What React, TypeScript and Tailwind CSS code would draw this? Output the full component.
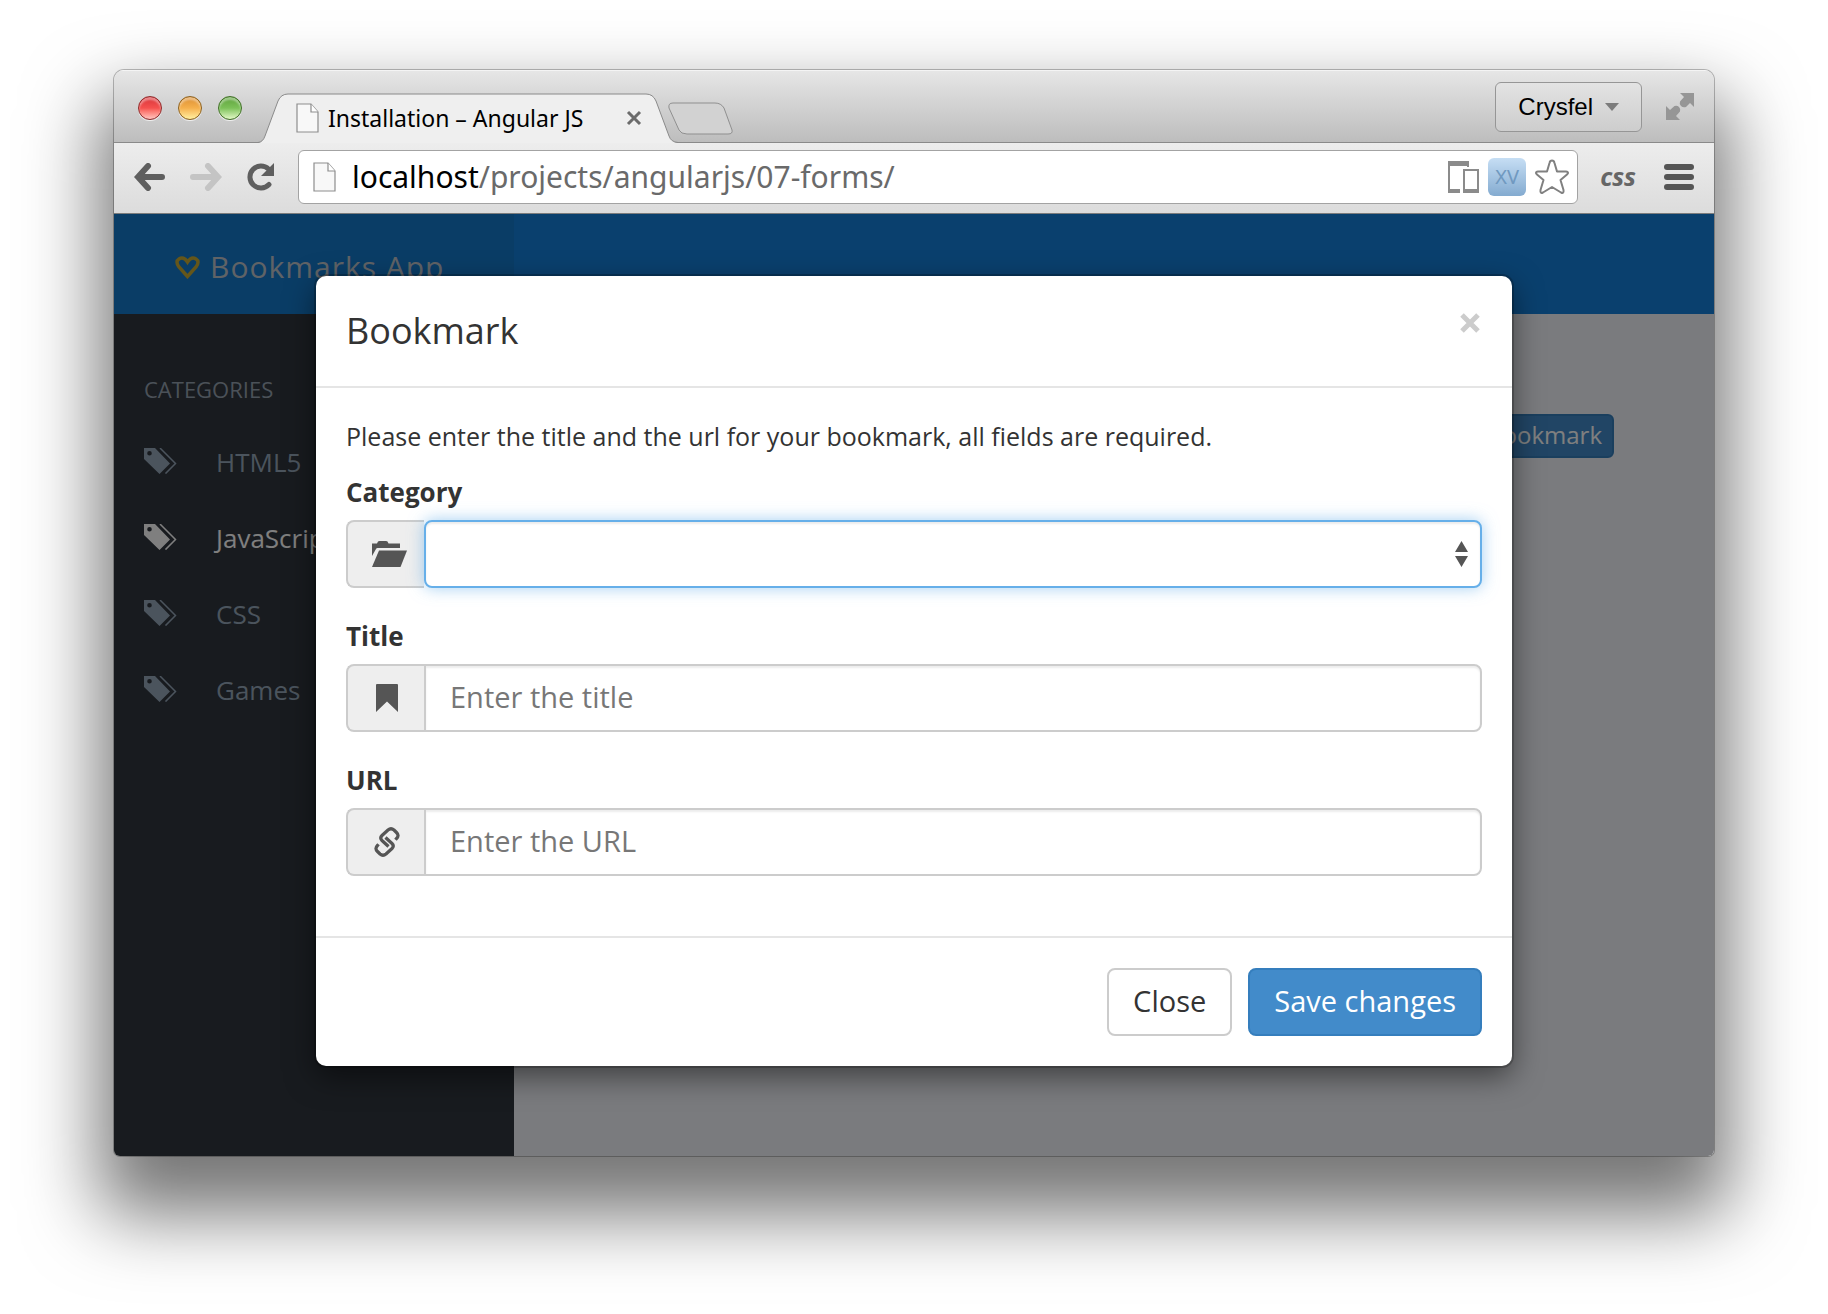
import React from 'react';

interface FieldProps {
  id: string;
  label: string;
  icon: React.ReactNode;
  children: React.ReactNode;
}

const categories = [
  { name: 'HTML5', active: false },
  { name: 'JavaScript', active: true },
  { name: 'CSS', active: false },
  { name: 'Games', active: false },
];

const TagsIcon = () => (
  <svg width="33" height="26" viewBox="0 0 33 26" fill="none">
    <path
      fillRule="evenodd"
      fill="currentColor"
      d="M0 0H11L26 15.500L15.500 26L0 11ZM5.500 3A2.300 2.300 0 1 0 5.500 7.600A2.300 2.300 0 1 0 5.500 3Z"
    />
    <path d="M16 0L31.500 15.500L21.500 25.600" stroke="currentColor" strokeWidth="1.500" />
  </svg>
);

const FolderIcon = () => (
  <svg width="40" height="26" viewBox="-5 0 40 26" fill="currentColor">
    <path d="M0 2.500H5L6 0.500Q6.500 0 7.500 0H14Q15 0 15.500 0.500L16.500 2.500H28V7H5.500Q4.500 7 4 8L0 15Z" />
    <path d="M7 9.500H35L28.500 26H0Z" />
  </svg>
);

const BookmarkIcon = () => (
  <svg width="22" height="28" viewBox="0 0 22 28" fill="currentColor">
    <path d="M1 0H21Q22 0 22 1V28L11 17.500L0 28V1Q0 0 1 0Z" />
  </svg>
);

const LinkIcon = () => (
  <svg
    width="26"
    height="30"
    viewBox="0 0 26 30"
    fill="none"
    stroke="currentColor"
    strokeWidth="3.200"
  >
    <path d="M14.500 19.500L8 13.500Q5.500 11 8 8.500L14 3Q17 0.500 20 3L22.500 5.500Q25.500 8.500 22.500 11.500L21.500 12.800" />
    <path d="M11.500 10.500L18 16.500Q20.500 19 18 21.500L12 27Q9 29.500 6 27L3.500 24.500Q0.500 21.500 3.500 18.500L4.500 17.200" />
  </svg>
);

const PageIcon = () => (
  <svg width="24" height="30" viewBox="0 0 24 30" fill="none">
    <path d="M1 1H15L22 9V29H1Z" fill="#f8f8f8" stroke="#8d8d8d" strokeWidth="1.200" />
    <path d="M15 1V9H22" fill="#fff" stroke="#8d8d8d" strokeWidth="1.200" />
  </svg>
);

const TabStrip = () => (
  <div className="flex h-[73px] items-end border-t border-b border-t-[#f4f4f4] border-b-[#8a8a8a] bg-linear-to-b from-[#e6e6e6] to-[#bdbdbd]">
    <div className="flex gap-4 self-center pt-0.5 pl-6">
      <button aria-label="Close window" className="h-6 w-6 rounded-full border border-[#8e2b2b] bg-linear-to-b from-[#d9343a] via-[#f5504e] to-[#ffc4c0] shadow-[inset_0_3px_2px_rgba(255,255,255,0.4),0_1px_0_#f0f0f0]" />
      <button aria-label="Minimize window" className="h-6 w-6 rounded-full border border-[#8c611f] bg-linear-to-b from-[#dc8f33] via-[#f5b04c] to-[#fff0a0] shadow-[inset_0_3px_2px_rgba(255,255,255,0.4),0_1px_0_#f0f0f0]" />
      <button aria-label="Zoom window" className="h-6 w-6 rounded-full border border-[#406f26] bg-linear-to-b from-[#5ea23c] via-[#7cc158] to-[#e2f8c6] shadow-[inset_0_3px_2px_rgba(255,255,255,0.4),0_1px_0_#f0f0f0]" />
    </div>
    <div className="relative -mb-px ml-4 h-[50px] w-[420px]">
      <svg className="absolute inset-0" width="420" height="50" viewBox="0 0 420 50">
        <path
          d="M0 50Q5 49 7 43L20 8Q23 1 30 1H388Q395 1 398 8L411 43Q413 49 420 50Z"
          fill="#efefef"
        />
        <path
          d="M0 49.500Q5 49 7 43L20 8Q23 1 30 1H388Q395 1 398 8L411 43Q413 49 420 49.500"
          fill="none"
          stroke="#8a8a8a"
        />
      </svg>
      <div className="relative flex h-full items-center pr-9 pl-[38px]">
        <PageIcon />
        <span className="ml-2 flex-1 text-[23px] whitespace-nowrap text-black">
          Installation – Angular JS
        </span>
        <button aria-label="Close tab">
          <svg width="16" height="16" viewBox="0 0 16 16" stroke="#6b6b6b" strokeWidth="3">
            <path d="M2 2L14 14M14 2L2 14" />
          </svg>
        </button>
      </div>
    </div>
    <button aria-label="New tab" className="mb-1.5 -ml-2.5">
      <svg width="66" height="34" viewBox="0 0 66 34">
        <path
          d="M5 1H47Q53 1 56 6L64 28Q65 32 60 32H19Q13 32 11 28L1 6Q0 1 5 1Z"
          fill="#d2d2d2"
          stroke="#8f8f8f"
        />
      </svg>
    </button>
    <div className="flex flex-1 items-center justify-end self-center pr-[19px]">
      <button className="flex h-[50px] items-center gap-3 rounded-md border border-[#969696] bg-linear-to-b from-[#e3e3e3] to-[#cdcdcd] px-[22px] font-['Liberation_Sans',sans-serif] text-2xl text-black">
        Crysfel
        <svg width="14" height="8" viewBox="0 0 14 8" fill="#7c7c7c">
          <path d="M0 0H14L7 8Z" />
        </svg>
      </button>
      <button aria-label="Full screen" className="ml-6">
        <svg width="29" height="29" viewBox="0 0 29 29" fill="#969696">
          <path d="M14 1H28V15L24 11L20 15Q17 16 15 14Q13 12 14 9.500L18 5Z" />
          <path d="M0 14L4 18L8.500 14Q11 13 13 15Q15 17 14 19.500L10 24L14 28H0Z" />
        </svg>
      </button>
    </div>
  </div>
);

const Toolbar = () => (
  <div className="flex h-[71px] items-center border-b border-[#7c7c7c] bg-linear-to-b from-[#ededed] to-[#dcdcdc] px-5 pb-0.5">
    <button aria-label="Back">
      <svg width="32" height="28" viewBox="0 0 32 28" fill="none" stroke="#5f5f5f" strokeWidth="6">
        <path d="M6 14H28M14 3L4 14L14 25" strokeLinecap="round" />
      </svg>
    </button>
    <button aria-label="Forward" className="ml-6">
      <svg width="32" height="28" viewBox="0 0 32 28" fill="none" stroke="#c4c4c4" strokeWidth="6">
        <path d="M3 14H26M18 3L28 14L18 25" strokeLinecap="round" />
      </svg>
    </button>
    <button aria-label="Reload" className="ml-6">
      <svg width="30" height="28" viewBox="0 0 30 28" fill="none">
        <path
          d="M23 21.500A11 11 0 1 1 22.500 6"
          stroke="#5f5f5f"
          strokeWidth="5"
          strokeLinecap="round"
        />
        <path d="M28 0V13H15Z" fill="#5f5f5f" />
      </svg>
    </button>
    <div className="ml-[22px] flex h-[54px] flex-1 items-center rounded-md border border-[#a3a3a3] bg-white pr-[7px] pl-3.5">
      <PageIcon />
      <div className="ml-[15px] flex-1 text-3xl whitespace-nowrap text-[#6a6a6a]">
        <span className="text-black">localhost</span>/projects/angularjs/07-forms/
      </div>
      <svg width="32" height="32" viewBox="0 0 32 32" fill="none" stroke="#8b8b8b" strokeWidth="2">
        <path d="M12 31H1V1H20V6" />
        <path d="M1 3H20M1 30H12" strokeWidth="4" />
        <path d="M16 9H30V31H16Z" />
        <path d="M16 30H30" strokeWidth="4" />
      </svg>
      <div className="ml-2 flex h-[38px] w-[38px] items-center justify-center rounded-md bg-linear-to-b from-[#c6def4] to-[#84abd0] text-xl text-[#7099c0]">
        XV
      </div>
      <svg className="ml-2" width="36" height="36" viewBox="0 0 36 36" fill="none" stroke="#808080" strokeWidth="2">
        <path
          strokeLinejoin="round"
          d="M18 1.500Q20 1.500 20.500 4L23 12.500H32Q35.500 13 33 15.500L26.500 21L29.500 31Q30 35 27 33.500L18 28L9 33.500Q6 35 6.500 31L9.500 21L3 15.500Q0.500 13 4 12.500H13L15.500 4Q16 1.500 18 1.500Z"
        />
      </svg>
    </div>
    <span className="ml-[22px] text-[25px] font-bold text-[#666] italic">css</span>
    <button aria-label="Menu" className="ml-7 flex flex-col gap-1">
      <span className="h-1.5 w-[30px] rounded-full bg-[#555]" />
      <span className="h-1.5 w-[30px] rounded-full bg-[#555]" />
      <span className="h-1.5 w-[30px] rounded-full bg-[#555]" />
    </button>
  </div>
);

const Field = ({ id, label, icon, children }: FieldProps) => (
  <div className="mb-7">
    <label htmlFor={id} className="mb-2 block text-[26px] leading-10 font-bold">
      {label}
    </label>
    <div className="flex h-[68px]">
      <span className="flex w-[78px] items-center justify-center rounded-l-lg border-2 border-r-0 border-[#ccc] bg-[#eee] pl-0.5 text-[#555]">
        {icon}
      </span>
      {children}
    </div>
  </div>
);

const inputClass =
  'min-w-0 flex-1 rounded-r-lg border-2 border-[#ccc] bg-white px-6 pb-0.5 text-[29px] text-[#555] shadow-[inset_0_2px_2px_rgba(0,0,0,0.075)] outline-none placeholder:text-[#777]';

const BookmarkModal = () => (
  <div
    role="dialog"
    aria-labelledby="modal-title"
    className="mx-auto w-full max-w-[1196px] rounded-[10px] bg-white text-[#333] shadow-[0_0_0_2px_rgba(0,0,0,0.2),0_10px_30px_rgba(0,0,0,0.5)]"
  >
    <div className="flex h-28 items-start justify-between border-b-2 border-[#e5e5e5] px-[30px] pt-[29px]">
      <h4 id="modal-title" className="text-4xl leading-[52px]">
        Bookmark
      </h4>
      <button aria-label="Close" className="mt-2 mr-0.5">
        <svg width="20" height="20" viewBox="0 0 20 20" stroke="#ccc" strokeWidth="5">
          <path d="M2 2L18 18M18 2L2 18" />
        </svg>
      </button>
    </div>

    <form className="px-[30px] pt-7 pb-8">
      <p className="mb-4 text-[25px] leading-10">
        Please enter the title and the url for your bookmark, all fields are required.
      </p>
      <Field id="category" label="Category" icon={<FolderIcon />}>
        <div className="relative flex min-w-0 flex-1">
          <select
            id="category"
            className="flex-1 appearance-none rounded-lg border-2 border-[#66afe9] bg-white px-6 text-[29px] shadow-[inset_0_2px_2px_rgba(0,0,0,0.075),0_0_16px_rgba(102,175,233,0.6)] outline-none"
          >
            <option></option>
          </select>
          <svg className="pointer-events-none absolute top-[21px] right-3.5" width="13" height="26" viewBox="0 0 13 26" fill="#555">
            <path d="M6.500 0L13 11H0ZM0 15H13L6.500 26Z" />
          </svg>
        </div>
      </Field>
      <Field id="title" label="Title" icon={<BookmarkIcon />}>
        <input id="title" type="text" placeholder="Enter the title" className={inputClass} />
      </Field>
      <Field id="url" label="URL" icon={<LinkIcon />}>
        <input id="url" type="text" placeholder="Enter the URL" className={inputClass} />
      </Field>
    </form>

    <div className="flex justify-end gap-4 border-t-2 border-[#e5e5e5] p-[30px] text-[29px]">
      <button className="h-[68px] rounded-lg border-2 border-[#ccc] bg-white px-6 pb-0.5">
        Close
      </button>
      <button className="h-[68px] rounded-lg border-2 border-[#357ebd] bg-[#428bca] px-6 pb-0.5 text-white">
        Save changes
      </button>
    </div>
  </div>
);

const BookmarksPage = () => (
  <div className="flex h-full flex-col">
    <header className="flex h-[100px] bg-[#1480dc]">
      <div className="flex w-[400px] items-center gap-2.5 bg-[#147acc] pt-1.5 pl-[61px] text-3xl tracking-[1px] text-[#c0c6cc]">
        <svg width="25" height="23" viewBox="0 0 25 23" fill="none" stroke="#c8ac34" strokeWidth="3.500">
          <path d="M12.500 20.500L4 11Q0 5.500 4 3Q8.500 0 12.500 6Q16.500 0 21 3Q25 5.500 21 11Z" />
        </svg>
        <span>Bookmarks App</span>
      </div>
    </header>
    <div className="flex flex-1">
      <nav className="w-[400px] bg-[#30363e] px-[30px] pt-[59px] text-[26px] text-[#96a8ba]">
        <h2 className="text-[22px] leading-8 text-[#96a3b0]">CATEGORIES</h2>
        <ul className="mt-[18px]">
          {categories.map((category) => (
            <li key={category.name}>
              <a
                href="#"
                className={
                  category.active
                    ? 'flex h-[76px] items-center gap-[39px] text-white'
                    : 'flex h-[76px] items-center gap-[39px]'
                }
              >
                <TagsIcon />
                <span className="pt-0.5">{category.name}</span>
              </a>
            </li>
          ))}
        </ul>
      </nav>
      <main className="flex flex-1 items-start justify-end bg-[#f4f6fc] pt-[100px] pr-[100px]">
        <button className="h-11 rounded-md border-2 border-[#357ebd] bg-[#428bca] px-2.5 pb-0.5 text-2xl leading-9 text-white">
          Add Bookmark
        </button>
      </main>
    </div>
  </div>
);

export default function App() {
  return (
    <div className="min-h-screen overflow-hidden bg-white px-[114px] pt-[70px] pb-[158px] font-['Open_Sans',sans-serif]">
      <div className="rounded-t-[10px] rounded-b-md shadow-[0_0_0_1px_rgba(0,0,0,0.25),0_44px_74px_15px_rgba(0,0,0,0.54)]">
        <div className="flex flex-col overflow-hidden rounded-t-[10px] rounded-b-md">
          <div className="font-['Noto_Sans',sans-serif]">
            <TabStrip />
            <Toolbar />
          </div>
          <div className="relative h-[942px]">
            <BookmarksPage />
            <div className="absolute inset-0 bg-black/50 px-[202px] pt-[62px]">
              <BookmarkModal />
            </div>
          </div>
        </div>
      </div>
    </div>
  );
}
